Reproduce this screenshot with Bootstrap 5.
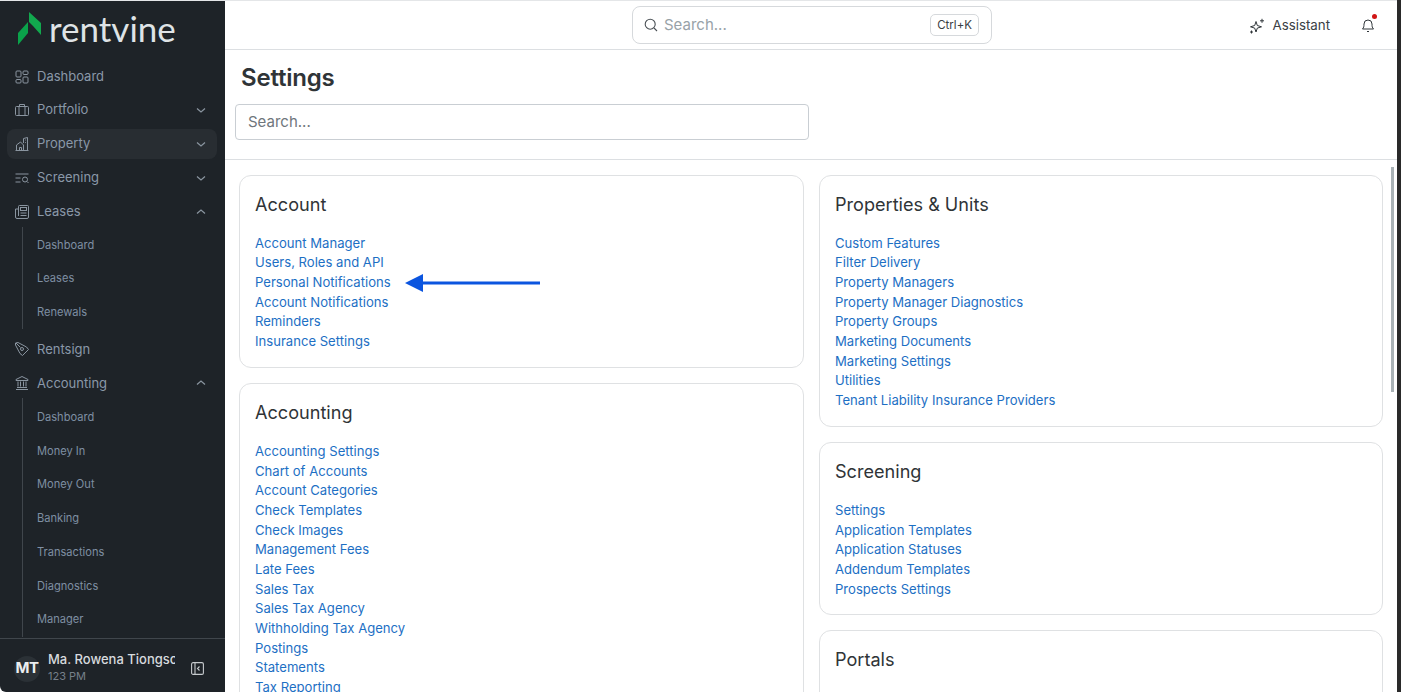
<!DOCTYPE html>
<html lang="en">
<head>
<meta charset="utf-8">
<title>Settings</title>
<link href="https://cdn.jsdelivr.net/npm/bootstrap@5.3.0/dist/css/bootstrap.min.css" rel="stylesheet">
<style>
html,body{height:692px;overflow:hidden;background:#fff}
body{font-family:Inter,"Liberation Sans",sans-serif;color:#2f3437}
.app-frame{height:692px;width:1401px}
.rail{width:225px;flex:none;background:#1e2328;border-top:1px solid #e4e6e8;border-bottom-left-radius:6px}
.brand{height:61px;padding:11px 0 0 18px;gap:7px}
.brand-word{font-family:Lato,Inter,sans-serif;font-size:35px;line-height:36px;font-weight:400;color:#dfe3e6;margin-top:-2px}
.menu-scroll{min-height:0;overflow:hidden;padding:0 8px 0 7px}
.menu-row{height:30px;margin-bottom:4px;padding:0 10px 0 8px;font-size:13px;color:#8a98a8;border-radius:8px;text-decoration:none;gap:8px}
.menu-row.tight-row{margin-bottom:3px}
.menu-row.active-row{background:#282d32}
.menu-row .ic{width:14px;height:14px;flex:none;stroke:#8a95a0;fill:none;stroke-width:1}
.menu-row .chev{width:12px;height:12px;flex:none;margin-left:auto;stroke:#8a95a0;fill:none;stroke-width:1.2}
.submenu{margin-left:15px;border-left:1px solid #40464c;margin-bottom:5px;padding:1px 0 0 14px}
.submenu.sub-low{padding-top:2px;margin-bottom:0}
.submenu a{display:flex;align-items:center;height:33.75px;font-size:11.1px;color:#7f8fa3;text-decoration:none}
.rail-foot{height:54px;flex:none;border-top:1px solid #40464c;padding:6px 21px 0 14px;margin-top:auto}
.avatar{width:26px;height:26px;border-radius:50%;background:#2b3136;color:#eceef0;font-size:15px;font-weight:700;flex:none;letter-spacing:-.4px}
.who{width:127px;margin-left:8px;overflow:hidden;white-space:nowrap;line-height:16px}
.who-name{font-size:13px;font-weight:500;color:#d7dade;margin-top:-2px;margin-bottom:1px}
.who-time{font-size:11px;color:#76808a}
.main-col{min-width:0;background:#fff}
.topbar{height:50px;flex:none;border-top:1px solid #e4e6e8;border-bottom:1px solid #dcdfe2;padding-right:21px}
.cmd{width:360px;height:38px;border:1px solid #d6d9dc;border-radius:8px;padding:0 12px 0 11px;margin-left:407px;font-size:15px;color:#98a2a8;line-height:1}
.cmd-label{margin-top:-2px}
.cmd-ic{margin-right:6px;flex:none}
.kbd-chip{margin-left:auto;border:1px solid #d6d9dc;border-radius:5px;font-size:11.5px;color:#3b4044;padding:2px 6px;height:22px;line-height:16px}
.assist{font-size:13.3px;color:#3a4045;gap:7px;margin-top:1px}
.bell{position:relative;margin-left:30px;width:16px;height:16px}
.bell svg{display:block}
.bell i{position:absolute;top:-3px;right:-1px;width:5px;height:5px;border-radius:50%;background:#d01515}
.page-head{height:110px;flex:none;border-bottom:1px solid #dcdfe2;padding:0 10px}
.page-title{font-size:24px;font-weight:600;color:#2f3437;margin:13px 0 12px 6px;line-height:29px;letter-spacing:-.2px}
.find{width:574px;height:36px;border:1px solid #c9ced3;border-radius:3px;font-size:15px;padding:0 12px 2px;color:#2f3437}
.find::placeholder{color:#6f767c}
.page-body{min-height:0;overflow:hidden;position:relative;padding:15px 14px 0;gap:15px}
.col-stack{gap:15px}
.col-wide{width:565px}
.col-narrow{width:564px}
.set-card{border:1px solid #dfe1e3;border-radius:12px;padding:16px 15px 15px}
.set-card.lead-card{padding-bottom:15.3px}
.set-title{font-size:18.1px;font-weight:400;color:#2f3437;line-height:24px;margin:0 0 18px}
.lead-card .set-title{margin-bottom:17.8px}
.set-card a{display:block;font-size:13.1px;line-height:19.65px;color:#1d6fc4;text-decoration:none}
.thumb{position:absolute;right:3px;top:7px;width:3px;height:225px;background:#a9b2b6}
.pointer{position:absolute;left:180px;top:114px;width:135px;height:18px}
.edge{width:4px;flex:none;background:#2a2a2a}
</style>
</head>
<body>
<div class="app-frame d-flex">
  <aside class="rail d-flex flex-column">
    <div class="brand d-flex align-items-start">
      <svg width="24" height="34" viewBox="0 0 24 34"><path d="M11 0 23 11V23L15 14 11 10Z" fill="#12a84e"/><path d="M0 21 10 10V21L0 33Z" fill="#0aa24a"/></svg>
      <span class="brand-word">rentvine</span>
    </div>
    <nav class="menu-scroll flex-grow-1">
      <a class="menu-row tight-row d-flex align-items-center" href="#"><svg class="ic" viewBox="0 0 14 14"><rect x="1" y="1" width="5" height="6" rx="1"/><rect x="8" y="1" width="5" height="3.5" rx="1"/><rect x="1" y="9.5" width="5" height="3.5" rx="1"/><rect x="8" y="7" width="5" height="6" rx="1"/></svg>Dashboard</a>
      <a class="menu-row d-flex align-items-center" href="#"><svg class="ic" viewBox="0 0 14 14"><rect x=".5" y="3.5" width="13" height="9" rx="1"/><path d="M4.5 3.5V1.5h5v2M4 3.5v9M10 3.5v9"/></svg>Portfolio<svg class="chev" viewBox="0 0 12 12"><path d="M2 4.5 6 8l4-3.5"/></svg></a>
      <a class="menu-row active-row d-flex align-items-center" href="#"><svg class="ic" viewBox="0 0 14 14"><path d="M.5 13.500h13M1.500 13.500V8l4-3 3 3v5.500M8.500 6V1.500l4-1v13M4.500 13.500v-3h2v3M10.200 3h.8M10.200 5.500h.8"/></svg>Property<svg class="chev" viewBox="0 0 12 12"><path d="M2 4.5 6 8l4-3.5"/></svg></a>
      <a class="menu-row d-flex align-items-center" href="#"><svg class="ic" viewBox="0 0 14 14"><path d="M.5 3h13M.5 7h5M.5 11h5"/><circle cx="10" cy="8.500" r="2.500"/><path d="m12 10.500 1.500 1.500"/></svg>Screening<svg class="chev" viewBox="0 0 12 12"><path d="M2 4.5 6 8l4-3.5"/></svg></a>
      <a class="menu-row d-flex align-items-center mb-0" href="#"><svg class="ic" viewBox="0 0 14 14"><path d="M3.500 11V1.500a1 1 0 0 1 1-1h8a1 1 0 0 1 1 1V12a1.500 1.500 0 0 1-1.500 1.500H2A1.500 1.500 0 0 1 .5 12V4h3"/><rect x="5.500" y="2.500" width="6" height="3"/><path d="M5.500 8h6M5.500 10.500h6"/></svg>Leases<svg class="chev" viewBox="0 0 12 12"><path d="M2 7.500 6 4l4 3.500"/></svg></a>
      <div class="submenu"><a href="#">Dashboard</a><a href="#">Leases</a><a href="#">Renewals</a></div>
      <a class="menu-row d-flex align-items-center" href="#"><svg class="ic" viewBox="0 0 14 14"><path d="M.5 1 3 .5l8.500 4.500 2 2.500-6 6-2.500-2L.5 3ZM1 1l4.500 4.500"/><circle cx="7" cy="7" r="1.500"/></svg>Rentsign</a>
      <a class="menu-row d-flex align-items-center mb-0" href="#"><svg class="ic" viewBox="0 0 14 14"><path d="M7 .5 13 3.500v1H1v-1ZM1 13.500h12M2 11.500h10M3 5.500v5M5.500 5.500v5M8.500 5.500v5M11 5.500v5"/></svg>Accounting<svg class="chev" viewBox="0 0 12 12"><path d="M2 7.500 6 4l4 3.500"/></svg></a>
      <div class="submenu sub-low"><a href="#">Dashboard</a><a href="#">Money In</a><a href="#">Money Out</a><a href="#">Banking</a><a href="#">Transactions</a><a href="#">Diagnostics</a><a href="#">Manager</a></div>
    </nav>
    <div class="rail-foot d-flex align-items-center">
      <div class="avatar d-flex align-items-center justify-content-center">MT</div>
      <div class="who"><div class="who-name">Ma. Rowena Tiongson</div><div class="who-time">123 PM</div></div>
      <svg class="ms-auto" width="13" height="13" viewBox="0 0 13 13" fill="none" stroke="#c6cacd" stroke-width="1.100"><rect x=".6" y=".6" width="11.800" height="11.800" rx="1.500"/><path d="M4 .6v11.800M8.500 4.500 6.500 6.500l2 2"/></svg>
    </div>
  </aside>
  <main class="main-col flex-grow-1 d-flex flex-column">
    <header class="topbar d-flex align-items-center">
      <div class="cmd d-flex align-items-center">
        <svg class="cmd-ic" width="14" height="14" viewBox="0 0 14 14" fill="none" stroke="#4a5055" stroke-width="1.100"><circle cx="6.200" cy="6.200" r="5"/><path d="m10 10 3 3"/></svg>
        <span class="cmd-label">Search...</span>
        <span class="kbd-chip">Ctrl+K</span>
      </div>
      <div class="assist d-flex align-items-center ms-auto">
        <svg width="16" height="16" viewBox="0 0 16 16" fill="none" stroke="#30363a" stroke-width="1"><path d="M7 3.500 8.300 7.500 12.500 8.800 8.300 10.100 7 14 5.700 10.100 1.500 8.800 5.700 7.500Z"/><path d="M13 .8v4M11 2.800h4M2.500 12.500v3M1 14h3"/></svg>
        Assistant
      </div>
      <div class="bell"><svg width="16" height="16" viewBox="0 0 16 16" fill="none" stroke="#30363a" stroke-width="1"><path d="M2.500 12c1.300-1.500 1.500-2.500 1.500-5a4 4 0 0 1 8 0c0 2.500.2 3.500 1.500 5ZM7 14.500h2"/></svg><i></i></div>
    </header>
    <section class="page-head">
      <h1 class="page-title">Settings</h1>
      <input class="find form-control rounded-1" placeholder="Search..." type="text">
    </section>
    <div class="page-body d-flex flex-grow-1">
      <div class="col-stack col-wide d-flex flex-column flex-shrink-0">
        <div class="set-card lead-card">
          <h2 class="set-title">Account</h2>
          <a href="#">Account Manager</a><a href="#">Users, Roles and API</a><a href="#">Personal Notifications</a><a href="#">Account Notifications</a><a href="#">Reminders</a><a href="#">Insurance Settings</a>
        </div>
        <div class="set-card">
          <h2 class="set-title">Accounting</h2>
          <a href="#">Accounting Settings</a><a href="#">Chart of Accounts</a><a href="#">Account Categories</a><a href="#">Check Templates</a><a href="#">Check Images</a><a href="#">Management Fees</a><a href="#">Late Fees</a><a href="#">Sales Tax</a><a href="#">Sales Tax Agency</a><a href="#">Withholding Tax Agency</a><a href="#">Postings</a><a href="#">Statements</a><a href="#">Tax Reporting</a>
        </div>
      </div>
      <div class="col-stack col-narrow d-flex flex-column flex-shrink-0">
        <div class="set-card lead-card">
          <h2 class="set-title">Properties &amp; Units</h2>
          <a href="#">Custom Features</a><a href="#">Filter Delivery</a><a href="#">Property Managers</a><a href="#">Property Manager Diagnostics</a><a href="#">Property Groups</a><a href="#">Marketing Documents</a><a href="#">Marketing Settings</a><a href="#">Utilities</a><a href="#">Tenant Liability Insurance Providers</a>
        </div>
        <div class="set-card">
          <h2 class="set-title">Screening</h2>
          <a href="#">Settings</a><a href="#">Application Templates</a><a href="#">Application Statuses</a><a href="#">Addendum Templates</a><a href="#">Prospects Settings</a>
        </div>
        <div class="set-card">
          <h2 class="set-title">Portals</h2>
        </div>
      </div>
      <svg class="pointer" viewBox="0 0 135 18"><path d="M135 7.500H18V0L0 9l18 9v-7.500h117Z" fill="#0b55df"/></svg>
      <div class="thumb"></div>
    </div>
  </main>
  <div class="edge"></div>
</div>
<script src="https://cdn.jsdelivr.net/npm/bootstrap@5.3.0/dist/js/bootstrap.bundle.min.js"></script>
</body>
</html>
